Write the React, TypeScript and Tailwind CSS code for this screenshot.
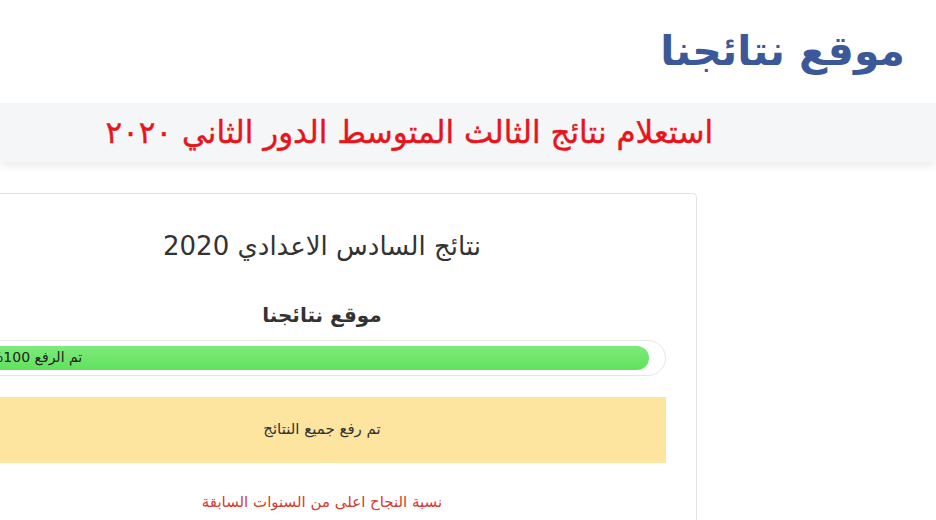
export default function App() {
  return (
    <div
      dir="rtl"
      className="w-[936px] h-[520px] overflow-hidden bg-white"
      style={{ fontFamily: '"DejaVu Sans", "Noto Sans", sans-serif' }}
    >
      {/* Header */}
      <header className="h-[103px] flex items-center pr-[31px]">
        <h1 className="text-[41px] font-bold leading-none text-[#3b5998]">موقع نتائجنا</h1>
      </header>

      {/* Title bar */}
      <div className="h-[59px] bg-[#f5f6f8] shadow-[0_4px_8px_rgba(0,0,0,0.08)] flex items-center pr-[223px]">
        <h2 className="text-[31px] leading-none text-[#e8141c] whitespace-nowrap [-webkit-text-stroke:0.4px_#e8141c]">
          استعلام نتائج الثالث المتوسط الدور الثاني ٢٠٢٠
        </h2>
      </div>

      {/* Content */}
      <div className="flex pt-[31px]">
        <div className="w-[239px] shrink-0" />
        <div className="w-[750px] shrink-0 border border-[#e3e3e3] rounded px-[30px] pt-[36px] pb-6 text-center">
          <h3 className="text-[26px] leading-tight text-[#333]">نتائج السادس الاعدادي 2020</h3>
          <h4 className="mt-[40px] text-[20px] font-bold leading-tight text-[#333]">موقع نتائجنا</h4>

          {/* Progress */}
          <div className="mt-[12px] h-[36px] rounded-full border border-[#e6e6e6] py-[5px] pl-[5px] pr-[16px]">
            <div className="h-full rounded-full bg-gradient-to-b from-[#7eea7b] to-[#5ee25a] flex items-center justify-end pl-[6px]">
              <span className="text-[14px] text-[#222]">تم الرفع 100%</span>
            </div>
          </div>

          {/* Alert */}
          <div className="mt-[21px] h-[66px] bg-[#fde59f] flex items-center justify-center">
            <span className="text-[15px] text-[#333]">تم رفع جميع النتائج</span>
          </div>

          <p className="mt-[28px] text-[15px] text-[#d63a2f]">نسبة النجاح اعلى من السنوات السابقة</p>
        </div>
      </div>
    </div>
  );
}
